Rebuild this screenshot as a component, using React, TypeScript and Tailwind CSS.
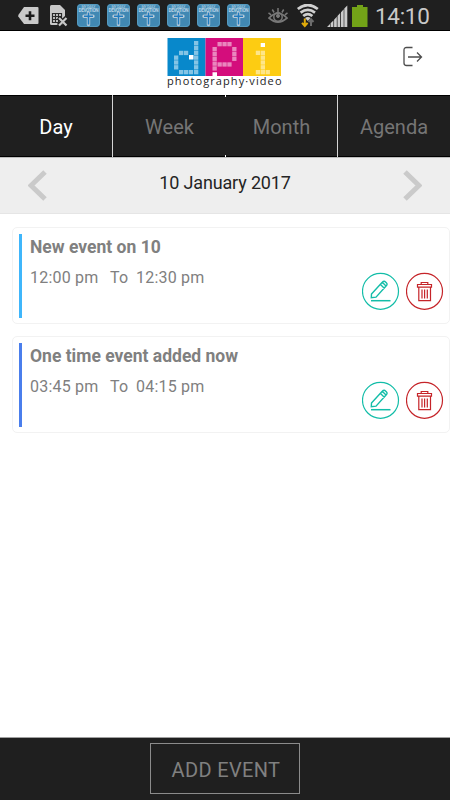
const TABS = ['Day', 'Week', 'Month', 'Agenda'];

interface CalendarEvent {
  title: string;
  from: string;
  to: string;
  bar: string;
}

const EVENTS: CalendarEvent[] = [
  { title: 'New event on 10', from: '12:00 pm', to: '12:30 pm', bar: 'bg-[#3fb6fb]' },
  { title: 'One time event added now', from: '03:45 pm', to: '04:15 pm', bar: 'bg-[#4a7eec]' },
];

// logo cells: [x, y, columns, rows] on a 4.9px grid
const LOGO_CELLS = [
  [27, 3, 1, 7], [12, 32, 3, 1], [7, 17.5, 1, 3], [12, 12.8, 2, 1],
  [45.5, 9, 1, 5], [50.5, 4, 3, 1], [65.2, 9, 1, 3], [50.5, 24.3, 3, 1],
  [88.8, 12.7, 1, 1], [93.7, 12.7, 1, 4], [88.8, 32, 3, 1],
];

function DevotionIcon() {
  return (
    <svg width="23" height="23" viewBox="0 0 23 23">
      <rect width="23" height="23" rx="4" fill="#4188b3" />
      <rect x=".5" y=".5" width="22" height="22" rx="3.5" fill="none" stroke="#559abf" />
      <text x="11.5" y="4.4" fontSize="3.6" fontWeight="700" textAnchor="middle" textLength="14" fill="#9cc1d8" fontFamily="Roboto">MY DAILY</text>
      <text x="11.5" y="8.4" fontSize="4.6" fontWeight="700" textAnchor="middle" textLength="20" fill="#b6d4e5" fontFamily="Roboto">DEVOTION</text>
      <path d="M11.5 9v11.5M7 12.3h9" stroke="#b6cad8" strokeWidth="3.4" strokeLinecap="round" />
      <path d="M11.5 8.5v12M7 12.3h9" stroke="#207bbf" strokeWidth="1.6" />
    </svg>
  );
}

function StatusBar() {
  return (
    <div className="flex h-[31px] shrink-0 border-b border-black bg-[#1f1f1f] pt-1">
      <svg className="ml-[18px] mt-0.5 shrink-0" width="21" height="20" viewBox="0 0 21 20">
        <path d="M6 1h13.5q1 0 1 1v15q0 1-1 1H6L.3 10.5v-1.4z" fill="#cacaca" />
        <path d="M12 5.2v9M7.5 9.7h9" stroke="#1b1b1b" strokeWidth="2.6" />
      </svg>
      <svg className="ml-2.5 shrink-0" width="20" height="24" viewBox="0 0 20 24">
        <path d="M1 2.5Q1 1 2.5 1H11l5 5v15H2.5Q1 21 1 19.5z" fill="#c8c8c8" />
        <path d="M3.5 9.5h9v9h-9zM6.5 9.5v9M9.5 9.5v9M3.5 12.5h9M3.5 15.5h9" fill="none" stroke="#292929" strokeWidth="1.2" />
        <path d="m9.5 13.5 8 8M17.5 13.5l-8 8" stroke="#1f1f1f" strokeWidth="4.5" />
        <path d="m10 14 7.5 7.5M17.5 14 10 21.5" stroke="#c8c8c8" strokeWidth="2.2" />
      </svg>
      <div className="ml-2 flex shrink-0 gap-[7px]">
        {[0, 1, 2, 3, 4, 5].map((n) => (
          <DevotionIcon key={n} />
        ))}
      </div>
      <svg className="ml-[18px] shrink-0" width="20" height="23" viewBox="0 0 20 23" fill="none" stroke="#787878">
        <path d="M1 14Q10 5 19 14Q10 22 1 14Z" strokeWidth="1.7" />
        <circle cx="10" cy="13" r="4.2" strokeWidth="1.5" />
        <circle cx="10" cy="12" r="1.5" fill="#787878" />
        <path d="M10 4v4M4.3 5.5l1.8 3M15.7 5.5l-1.8 3M.5 8.8l2.6 2M19.5 8.8l-2.6 2" strokeWidth="1.5" />
      </svg>
      <svg className="ml-2 shrink-0" width="24" height="25" viewBox="0 0 24 25" fill="none">
        <path d="M1.8 5Q11.8-3 21.8 5M4.6 8.6q7.2-5.5 14.4 0M7.2 12q4.6-3.8 9.2 0" stroke="#d0d0d0" strokeWidth="2.7" />
        <path d="M9 14q2.8-2 5.6 0l-2.8 3z" fill="#d0d0d0" />
        <path d="M8.8 14.5v7.5M6 18.8l2.8 3.2 2.8-3.2" stroke="#e2ac0b" strokeWidth="2" />
        <path d="M15 22v-6.5M12.5 18l2.5-2.8 2.5 2.8" stroke="#6c6c6c" strokeWidth="2" />
      </svg>
      <svg className="ml-[7px] shrink-0" width="21" height="24" viewBox="0 0 21 24">
        <path d="M0 23 3 20v3zM3.6 19.3 6.4 16.500V23H3.600zM7.100 15.800l2.700-3V23H7.100zM10.500 12l2.700-3v14h-2.700zM14 8.300l2.700-3V23H14zM17.300 4.500 20.300 1.500V23h-3z" fill="#cbcbcb" />
      </svg>
      <svg className="ml-[4px] mt-px shrink-0" width="17" height="23" viewBox="0 0 17 23">
        <path d="M0 2h5V0h6v2h4.500v20H0z" fill="#73a318" />
      </svg>
      <span className="ml-[6px] w-[60px] text-[22.5px] leading-6 tracking-[-0.3px] text-[#c9c9c9]">14:10</span>
    </div>
  );
}

function Logo() {
  return (
    <svg width="116" height="52" viewBox="0 0 116 52">
      <path fill="#0888cb" d="M0.5 0h38v38h-38z" />
      <path fill="#d40d7c" d="M38.5 0H76v38H38.5z" />
      <path fill="#fdcc12" d="M76 0h38v38H76z" />
      {LOGO_CELLS.map(([x, y, cols, rows]) =>
        Array.from({ length: cols * rows }, (_, n) => (
          <rect
            key={`${x}-${y}-${n}`}
            x={x + (n % cols) * 4.9}
            y={y + Math.floor(n / cols) * 4.83}
            width="4.3"
            height="4.3"
            fill="#fff"
            fillOpacity=".5"
          />
        )),
      )}
      <path fill="#fff" d="M22 17h4.5v4.5H22zM45.5 34.3H50v4.2h-4.5zM93.7 5H98v4h-4.3z" />
      <text x="0" y="47" fontSize="11" textLength="114.5" fill="#242424" fontFamily="Open Sans, sans-serif">photography·video</text>
    </svg>
  );
}

function EditButton() {
  return (
    <button aria-label="Edit">
      <svg width="38" height="38" viewBox="0 0 38 38" fill="none" stroke="#13bda8">
        <circle cx="18.5" cy="19.3" r="18" strokeWidth="1.2" />
        <path d="m9.5 22 10.5-11.5q2-2 3.5-.6l.8.8q1.5 1.5 0 3L14 25.2l-4.7.6zM18.5 12.5l4 4M20.5 10.5l4 4" strokeWidth="1.4" />
        <path d="M9 28.7h19.5" strokeWidth="1.5" />
      </svg>
    </button>
  );
}

function DeleteButton() {
  return (
    <button aria-label="Delete">
      <svg width="38" height="38" viewBox="0 0 38 38" fill="none" stroke="#c52429">
        <circle cx="18.5" cy="19.3" r="18" strokeWidth="1.2" />
        <path d="M15.2 12.3v-1.8h6.6v1.8M11.5 12.5h14v2.7h-14zM12.8 15.2v13.5h11.7V15.2M16 17.5v9M18.6 17.5v9M21.3 17.5v9" strokeWidth="1.2" />
      </svg>
    </button>
  );
}

function EventCard({ event }: { event: CalendarEvent }) {
  return (
    <div className="flex h-[97px] rounded-[5px] border border-[#f2f2f2] bg-white">
      <div className={`ml-1.5 mt-1.5 h-[84px] w-[3px] shrink-0 ${event.bar}`} />
      <div className="ml-2 flex-1 whitespace-nowrap text-[#808080]">
        <h2 className="mt-2 text-[17.5px] font-bold leading-[22px]">{event.title}</h2>
        <div className="mt-2 flex text-base leading-6 tracking-[0.2px]">
          <span className="w-20">{event.from}</span>
          <span className="w-[26px]">To</span>
          <span>{event.to}</span>
        </div>
      </div>
      <div className="mr-[5px] flex items-start gap-1.5 pt-[43.5px]">
        <EditButton />
        <DeleteButton />
      </div>
    </div>
  );
}

export default function App() {
  return (
    <div className="flex h-[800px] w-[450px] flex-col overflow-hidden bg-white font-['Roboto',sans-serif]">
      <StatusBar />
      <header className="flex h-16 shrink-0 justify-between pl-[167px] pr-[27px] pt-[6.5px]">
        <Logo />
        <svg className="mt-2" width="20" height="21" viewBox="0 0 20 21" fill="none" stroke="#4d4d4d" strokeWidth="1.3">
          <path d="M9.5 1.5H3.5q-2.5 0-2.5 2.5v13q0 2.500 2.500 2.500h6M5 11h13M14 6.500l4.500 4.500-4.500 4.500" />
        </svg>
      </header>
      <nav className="relative grid h-[62px] shrink-0 grid-cols-[112px_112px_111px_112px] gap-px bg-[#d5d5d5]">
        {TABS.map((tab) => (
          <button
            key={tab}
            className={`border-y border-black bg-[#1f1f1f] pt-0.5 text-xl nth-2:w-[113px] ${
              tab === 'Day' ? 'text-white' : 'text-[#757575]'
            }`}
          >
            {tab}
          </button>
        ))}
        <span className="absolute left-[225px] top-0 h-0.5 w-px bg-white" />
        <span className="absolute bottom-0 left-[225px] h-0.5 w-px bg-white" />
      </nav>
      <div className="flex h-[57px] shrink-0 items-center justify-between border-b border-t border-[#e5e5e5] border-t-[#bdbdbd] bg-[#eee] pl-7 pr-7">
        <svg width="19" height="31" viewBox="0 0 19 31" fill="none" stroke="#cacaca" strokeWidth="5">
          <path d="M17 2 3 15.5 17 29" />
        </svg>
        <span className="mb-[5px] text-lg tracking-[-0.15px] text-[#242424]">10 January 2017</span>
        <svg width="19" height="31" viewBox="0 0 19 31" fill="none" stroke="#cacaca" strokeWidth="5">
          <path d="m2 2 14 13.5L2 29" />
        </svg>
      </div>
      <main className="flex flex-1 flex-col gap-3 pl-3 pt-[13px]">
        {EVENTS.map((event) => (
          <EventCard key={event.title} event={event} />
        ))}
      </main>
      <footer className="flex h-[63px] shrink-0 justify-center border-t border-[#a0a0a0] bg-[#1f1f1f] pt-[5px]">
        <button className="h-[51px] w-[150px] border border-[#8b8b8b] pl-0.5 pt-0.5 text-xl tracking-[0.35px] text-[#808080]">ADD EVENT</button>
      </footer>
    </div>
  );
}
